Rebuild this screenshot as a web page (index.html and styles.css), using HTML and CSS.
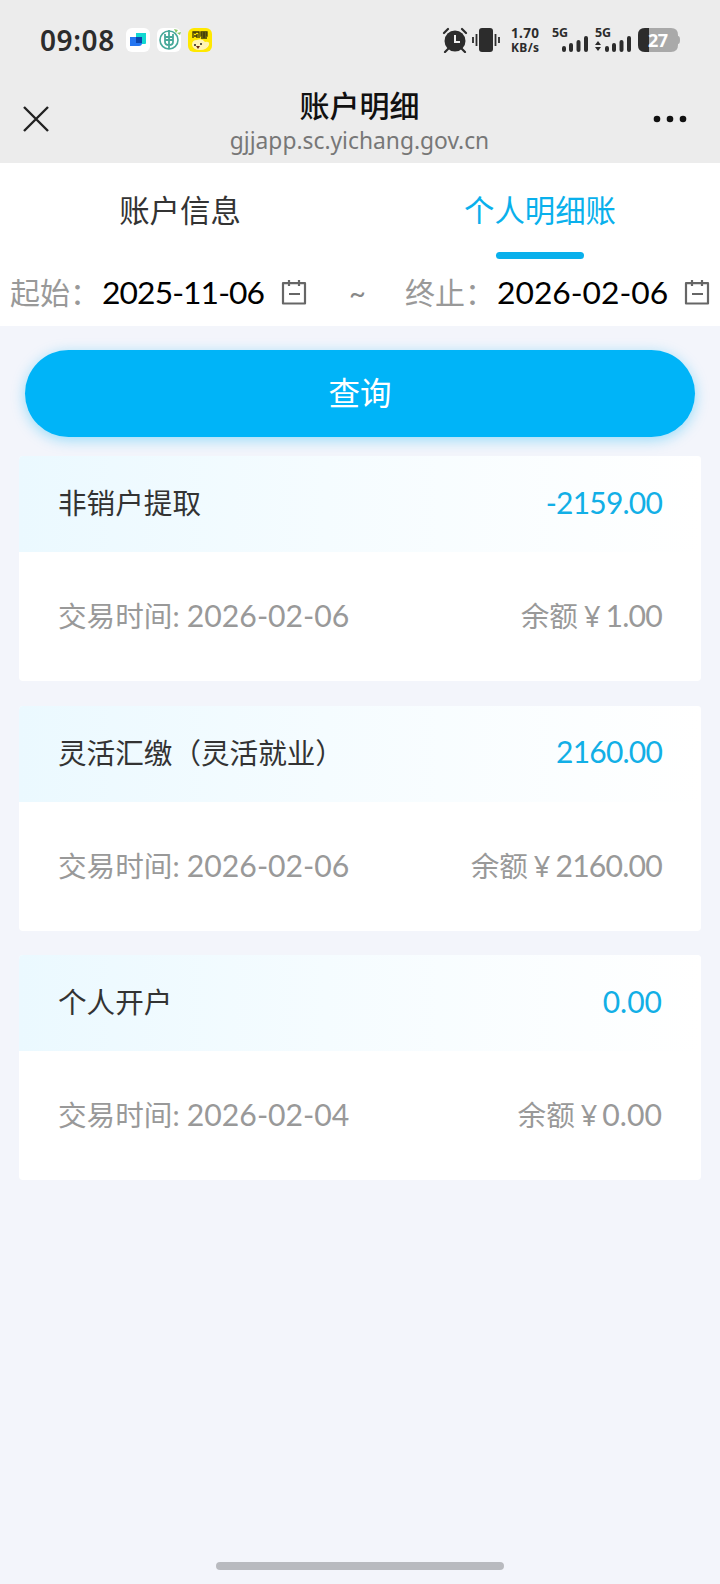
FILE: index.html
```html
<!DOCTYPE html>
<html lang="zh-CN">
<head>
<meta charset="utf-8">
<title>账户明细</title>
<link rel="stylesheet" href="styles.css">
</head>
<body>
<div class="phone">
  <header class="top">
    <div class="status">
      <div class="status-left">
        <span class="clock">09:08</span>
        <svg class="app" viewBox="0 0 24 24"><rect width="24" height="24" rx="6" fill="#fff"/><path d="M10 5h10v10q0 1-1 1h-9z" fill="#12d8d2"/><path d="M4 9h12v6q0 3-3 3H4z" fill="#2476f2"/><path d="M10 9h6v6h-6z" fill="#0b45ae"/></svg>
        <svg class="app" viewBox="0 0 24 24"><rect width="24" height="24" rx="6" fill="#fff"/><g fill="none" stroke="#47a99a"><circle cx="12" cy="12" r="9" stroke-width="1.6"/><path d="M12 2v19M8 6v8q0 3 4 3t4-3V6M8 9h8M8 12h8" stroke-width="1.8"/></g><path d="M17 1l2 4 2-3zM20 5l3 2 1-3z" fill="#8ac765"/></svg>
        <svg class="app" viewBox="0 0 24 24"><rect width="24" height="24" rx="6" fill="#ffe800"/><path d="M5 10V4h6v6M7 4v2m-1 2h3m0-2v4M13 4h6v4h-6zM16 4v6M13 10h6M13 6h6" fill="none" stroke="#34310b" stroke-width="1.3"/><path d="M4 17q0-5 5-5 5-2 8 2 5-1 4 3-2 5-9 5-7 0-8-5z" fill="#fff4b5"/><circle cx="7" cy="17" r="1" fill="#222"/><circle cx="13" cy="16" r="1" fill="#222"/><path d="M8 18h4l-2 3z" fill="#6b2715"/></svg>
      </div>
      <div class="status-right">
        <svg class="alarm" viewBox="0 0 26 26"><circle cx="13" cy="14" r="10.5" fill="#2c2c2c"/><path d="M2 6l4-4M24 6l-4-4M6 22l-3 3M20 22l3 3" stroke="#2c2c2c" stroke-width="2.2" stroke-linecap="round"/><path d="M13 8v7h5" stroke="#eee" stroke-width="2" fill="none"/></svg>
        <svg class="vibrate" viewBox="0 0 28 26"><rect x="7" y="1" width="14" height="24" rx="3" fill="#2c2c2c"/><path d="M4.500 7v12M1 10v6M23.500 7v12M27 10v6" stroke="#2c2c2c" stroke-width="1.8"/></svg>
        <svg class="speed" viewBox="0 0 29 28"><text x="0" y="12" textLength="28" class="rate">1.70</text><text x="0" y="26" textLength="28" class="unit">KB/s</text></svg>
        <svg class="signal" viewBox="0 0 37 28"><text x="0" y="11" textLength="16" class="net">5G</text><path d="M12 22v2M19 19v5M26.500 16v8M34 12v12" stroke="#2c2c2c" stroke-width="4" stroke-linecap="round"/></svg>
        <svg class="signal" viewBox="0 0 37 28"><text x="0" y="11" textLength="16" class="net">5G</text><path d="M0 19l3-4 3 4zM0 21l3 4 3-4z" fill="#2c2c2c"/><path d="M12 22v2M19 19v5M26.500 16v8M34 12v12" stroke="#2c2c2c" stroke-width="4" stroke-linecap="round"/></svg>
        <svg class="battery" viewBox="0 0 42 24"><path d="M7 0h26q7 0 7 7v1q2 0 2 4t-2 4v1q0 7-7 7H7q-7 0-7-7V7Q0 0 7 0z" fill="#a9a9a9"/><path d="M11 0H7Q0 0 0 7v10q0 7 7 7h4z" fill="#2c2c2c"/><text x="10" y="18.500" textLength="20" class="level">27</text></svg>
      </div>
    </div>
    <div class="nav">
      <svg class="close" viewBox="0 0 26 26"><path d="M1 1l24 24M25 1L1 25" stroke="#222" stroke-width="2.4"/></svg>
      <div class="heading"><h1>账户明细</h1><p>gjjapp.sc.yichang.gov.cn</p></div>
      <svg class="more" viewBox="0 0 34 8"><circle cx="4" cy="4" r="3.300"/><circle cx="17" cy="4" r="3.300"/><circle cx="30" cy="4" r="3.300"/></svg>
    </div>
  </header>
  <section class="filter">
    <nav class="tabs"><a>账户信息</a><a class="active">个人明细账</a></nav>
    <div class="dates">
      <span class="label">起始：</span><span class="date start">2025-11-06</span>
      <svg class="cal" viewBox="0 0 26 26"><path d="M2 4.200h22v20.300H2zM8 1v6M18 1v6M8 15h11" fill="none" stroke="#666" stroke-width="2.200" stroke-linejoin="round"/></svg>
      <span class="tilde">~</span>
      <span class="label">终止：</span><span class="date">2026-02-06</span>
      <svg class="cal" viewBox="0 0 26 26"><path d="M2 4.200h22v20.300H2zM8 1v6M18 1v6M8 15h11" fill="none" stroke="#666" stroke-width="2.200" stroke-linejoin="round"/></svg>
    </div>
  </section>
  <button class="query">查询</button>
  <main class="list">
    <article class="card">
      <div class="card-head"><span>非销户提取</span><span class="amount tight">-2159.00</span></div>
      <div class="card-body"><span>交易时间: <b>2026-02-06</b></span><span>余额<i>¥</i><b class="tight">1.00</b></span></div>
    </article>
    <article class="card">
      <div class="card-head"><span>灵活汇缴（灵活就业）</span><span class="amount tight">2160.00</span></div>
      <div class="card-body"><span>交易时间: <b>2026-02-06</b></span><span>余额<i>¥</i><b class="tight">2160.00</b></span></div>
    </article>
    <article class="card">
      <div class="card-head"><span>个人开户</span><span class="amount">0.00</span></div>
      <div class="card-body"><span>交易时间: <b>2026-02-04</b></span><span>余额<i>¥</i><b>0.00</b></span></div>
    </article>
  </main>
  <div class="home"></div>
</div>
</body>
</html>
```
FILE: styles.css
```css
* { box-sizing: border-box; }
body { margin: 0; font-family: Lato, "Noto Sans CJK SC", sans-serif; }
h1, p { margin: 0; }
svg { display: block; flex: none; }
.phone { width: 720px; height: 1584px; display: flex; flex-direction: column; background: #f3f5fb; overflow: hidden; }
.top { height: 163px; background: #ececec; flex: none; }
.status { height: 80px; display: flex; justify-content: space-between; align-items: center; padding: 0 40px; }
.status-left { display: flex; align-items: center; }
.clock { width: 77px; margin-right: 9px; font: 600 28px/30px "Noto Sans", sans-serif; letter-spacing: .6px; color: #2c2c2c; white-space: nowrap; }
.app { width: 24px; height: 24px; margin-right: 7px; }
.status-right { display: flex; align-items: center; }
.alarm { width: 26px; height: 26px; }
.vibrate { width: 28px; height: 26px; margin: 0 11px 0 4px; }
.speed { width: 29px; height: 28px; margin-right: 12px; overflow: visible; }
.rate { font: 700 13.500px "Noto Sans", sans-serif; fill: #2c2c2c; }
.unit { font: 700 12px "Noto Sans", sans-serif; fill: #2c2c2c; }
.signal { width: 37px; height: 28px; margin-right: 6px; overflow: visible; }
.net { font: 700 12.500px "Noto Sans", sans-serif; fill: #2c2c2c; }
.battery { width: 42px; height: 24px; }
.level { font: 700 18px "Noto Sans", sans-serif; fill: #fff; }
.nav { height: 83px; display: flex; align-items: flex-start; justify-content: space-between; padding: 0 33px 0 23px; }
.close { width: 26px; height: 26px; margin-top: 26px; }
.more { width: 34px; height: 8px; margin-top: 35px; fill: #111; }
.heading { text-align: center; padding-left: 17px; }
h1 { font: 500 30px/40px "Noto Sans CJK SC", sans-serif; color: #111; margin-top: 4px; }
.heading p { font: 22.800px/28px "Noto Sans", sans-serif; color: #777; margin-top: 3px; }
.filter { height: 163px; background: #fff; flex: none; }
.tabs { height: 96px; display: grid; grid-template-columns: 1fr 1fr; }
.tabs a { display: flex; flex-direction: column; align-items: center; padding-top: 24px; font-size: 30.400px; line-height: 46px; color: #333; }
.tabs .active { color: #09b0ec; }
.active::after { content: ""; width: 88px; height: 7px; border-radius: 4px; margin-top: 19px; background: #09b0ec; }
.dates { height: 67px; display: flex; align-items: center; padding: 0 0 1px 10px; white-space: nowrap; }
.label { width: 92px; font-size: 30px; color: #999; padding-bottom: 3px; }
.date { width: 187px; font-size: 31.800px; color: #000; }
.start { width: 179px; letter-spacing: -.9px; }
.cal { width: 26px; height: 26px; }
.tilde { width: 98px; text-align: center; font-size: 29px; color: #888; padding-left: 3px; }
.query { flex: none; width: 670px; height: 87px; margin: 24px 25px 19px; padding: 0 0 6px; border: 0; border-radius: 44px; background: #00b4f8; box-shadow: 0 3px 14px rgba(0, 180, 248, .38); color: #fff; font: 31.500px/44px "Noto Sans CJK SC", sans-serif; }
.list { display: flex; flex-direction: column; gap: 24.500px; padding: 0 19px; }
.card { height: 225px; border-radius: 4px; background: #fff; overflow: hidden; font-size: 28.600px; white-space: nowrap; }
.card-head, .card-body { display: flex; align-items: center; justify-content: space-between; }
.card-head { height: 96px; padding: 0 39px 5px; color: #333; background: linear-gradient(90deg, #ebf9ff, #f5fcff 45%, #fff); }
.amount { color: #12afe6; font-size: 30px; }
.tight { letter-spacing: -.8px; }
.card-body { height: 129px; padding: 0 39px 4px; color: #999; }
.card-body b { font-weight: 400; font-size: 30.200px; }
.card-body i { font: 29px "Noto Sans", sans-serif; margin: 0 5px 0 6px; }
.home { flex: none; width: 288px; height: 8px; border-radius: 4px; background: #b8babf; margin: auto auto 14px; }
```
